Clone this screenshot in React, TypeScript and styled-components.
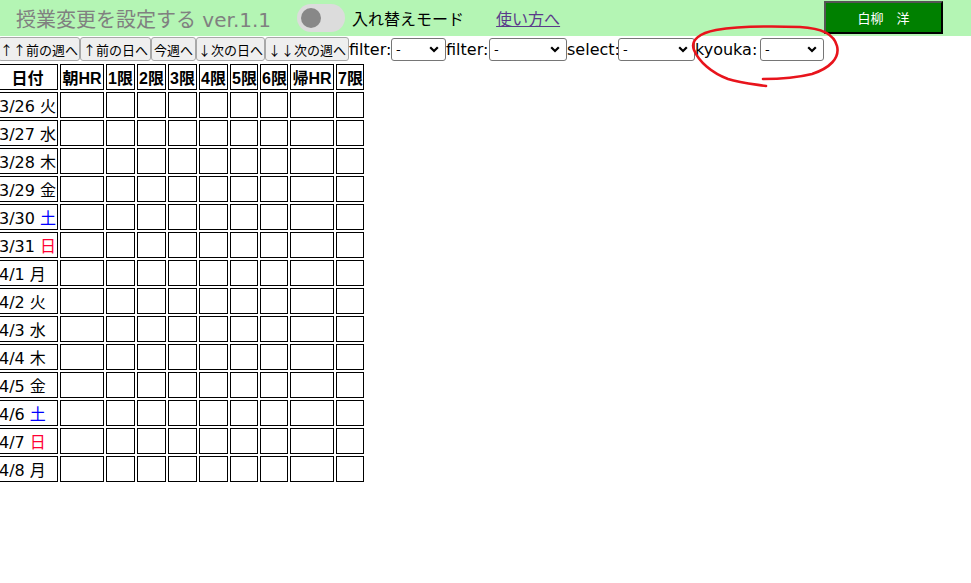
import React from "react";
import styled, { createGlobalStyle } from "styled-components";

const Global = createGlobalStyle`
  html, body { margin: 0; padding: 0; background: #fff; }
  body {
    font-family: "DejaVu Sans", "Noto Sans CJK JP", sans-serif;
    font-size: 16px;
    color: #000;
    overflow: hidden;
  }
`;

const Page = styled.div`
  position: relative;
  width: 971px;
  height: 583px;
  overflow: hidden;
`;

const Header = styled.header`
  display: flex;
  align-items: center;
  height: 36px;
  background: #b4f5b4;
`;

const Title = styled.h1`
  margin: 0 0 0 16px;
  font-size: 20px;
  font-weight: normal;
  color: #808080;
  white-space: nowrap;
`;

const Toggle = styled.span`
  display: flex;
  align-items: center;
  margin-left: 26px;
  width: 48px;
  height: 28px;
  border-radius: 14px;
  background: #dcdcdc;
  box-sizing: border-box;
  padding-left: 4px;
`;

const Knob = styled.span`
  width: 20px;
  height: 20px;
  border-radius: 50%;
  background: #888;
`;

const ModeLabel = styled.span`
  margin-left: 7px;
  font-size: 16px;
  white-space: nowrap;
`;

const HelpLink = styled.a`
  margin-left: 32px;
  font-size: 16px;
  color: #5a3a8a;
  text-decoration: underline;
  white-space: nowrap;
`;

const UserButton = styled.button`
  margin-left: auto;
  margin-right: 28px;
  width: 119px;
  height: 33px;
  margin-top: -2px;
  background: #008000;
  color: #fff;
  font-family: "Noto Sans CJK JP", sans-serif;
  font-size: 13px;
  border: 2px solid;
  border-color: #555 #000 #000 #555;
  padding: 0;
  cursor: pointer;
`;

const Toolbar = styled.div`
  display: flex;
  align-items: center;
  height: 26px;
  margin-left: -2px;
`;

const NavButton = styled.button<{ $w: number }>`
  width: ${(p) => p.$w}px;
  height: 24px;
  padding: 0;
  background: #efefef;
  border: 1px solid #a8a8a8;
  border-radius: 3px;
  font-family: "Noto Sans CJK JP", sans-serif;
  font-size: 13px;
  color: #000;
  white-space: nowrap;
  overflow: hidden;
  flex: none;
`;

const FieldLabel = styled.span<{ $w: number }>`
  display: inline-block;
  width: ${(p) => p.$w}px;
  flex: none;
  font-size: 16px;
  white-space: nowrap;
`;

const SelectWrap = styled.span<{ $w: number }>`
  position: relative;
  display: inline-block;
  width: ${(p) => p.$w}px;
  height: 23px;
  flex: none;
`;

const Select = styled.select`
  appearance: none;
  width: 100%;
  height: 100%;
  box-sizing: border-box;
  border: 1px solid #767676;
  border-radius: 3px;
  background: #fff;
  padding: 0 0 0 4px;
  font-family: "DejaVu Sans", sans-serif;
  font-size: 13px;
  color: #000;
`;

const Chevron = styled.svg`
  position: absolute;
  right: 7px;
  top: 8px;
  width: 10px;
  height: 7px;
  pointer-events: none;
`;

const Table = styled.table`
  border-collapse: separate;
  border-spacing: 2px;
  table-layout: fixed;
  width: 371px;
  margin-left: -5px;
`;

const Th = styled.th<{ $w: number }>`
  box-sizing: border-box;
  width: ${(p) => p.$w}px;
  height: 26px;
  padding: 0 1px;
  border: 1px solid #000;
  font-family: "Liberation Sans", "Noto Sans CJK JP", sans-serif;
  font-weight: bold;
  font-size: 16px;
  white-space: nowrap;
  overflow: hidden;
  text-align: center;
`;

const Td = styled.td`
  box-sizing: border-box;
  height: 26px;
  padding: 0 1px;
  border: 1px solid #000;
`;

const DateCell = styled(Td)`
  font-size: 16px;
  white-space: nowrap;
  text-align: left;
`;

const Weekday = styled.span<{ $c: string }>`
  color: ${(p) => p.$c};
`;

const Annotation = styled.svg`
  position: absolute;
  left: 0;
  top: 0;
  width: 971px;
  height: 583px;
  pointer-events: none;
`;

const navButtons = [
  { t: "↑↑前の週へ", w: 82 },
  { t: "↑前の日へ", w: 71 },
  { t: "今週へ", w: 45 },
  { t: "↓次の日へ", w: 69 },
  { t: "↓↓次の週へ", w: 84 },
];

const fields = [
  { l: "filter:", lw: 42, sw: 55 },
  { l: "filter:", lw: 43, sw: 78 },
  { l: "select:", lw: 51, sw: 77 },
  { l: "kyouka:", lw: 65, sw: 64 },
];

const cols = [
  { t: "朝HR", w: 44 },
  { t: "1限", w: 29 },
  { t: "2限", w: 29 },
  { t: "3限", w: 29 },
  { t: "4限", w: 29 },
  { t: "5限", w: 28 },
  { t: "6限", w: 28 },
  { t: "帰HR", w: 44 },
  { t: "7限", w: 28 },
];

const days = [
  ["3/26", "火"],
  ["3/27", "水"],
  ["3/28", "木"],
  ["3/29", "金"],
  ["3/30", "土"],
  ["3/31", "日"],
  ["4/1", "月"],
  ["4/2", "火"],
  ["4/3", "水"],
  ["4/4", "木"],
  ["4/5", "金"],
  ["4/6", "土"],
  ["4/7", "日"],
  ["4/8", "月"],
];

const wdColor = (w: string) => (w === "土" ? "#0000ff" : w === "日" ? "#ff0033" : "#000");

export default function App() {
  return (
    <Page>
      <Global />
      <Header>
        <Title>授業変更を設定する ver.1.1</Title>
        <Toggle>
          <Knob />
        </Toggle>
        <ModeLabel>入れ替えモード</ModeLabel>
        <HelpLink href="#">使い方へ</HelpLink>
        <UserButton>白柳　洋</UserButton>
      </Header>
      <Toolbar>
        {navButtons.map((b) => (
          <NavButton key={b.t} $w={b.w}>
            {b.t}
          </NavButton>
        ))}
        {fields.map((f, i) => (
          <React.Fragment key={i}>
            <FieldLabel $w={f.lw}>{f.l}</FieldLabel>
            <SelectWrap $w={f.sw}>
              <Select defaultValue="-">
                <option value="-">-</option>
              </Select>
              <Chevron viewBox="0 0 10 7">
                <path d="M1.2 1.2 L5 5 L8.8 1.2" fill="none" stroke="#000" strokeWidth="2.2" />
              </Chevron>
            </SelectWrap>
          </React.Fragment>
        ))}
      </Toolbar>
      <Table>
        <thead>
          <tr>
            <Th $w={61}>日付</Th>
            {cols.map((c) => (
              <Th key={c.t} $w={c.w}>
                {c.t}
              </Th>
            ))}
          </tr>
        </thead>
        <tbody>
          {days.map(([d, w]) => (
            <tr key={d}>
              <DateCell>
                {d} <Weekday $c={wdColor(w)}>{w}</Weekday>
              </DateCell>
              {cols.map((c) => (
                <Td key={c.t} />
              ))}
            </tr>
          ))}
        </tbody>
      </Table>
      <Annotation viewBox="0 0 971 583">
        <path
          d="M766 86 C752 84 740 83 728 79 C712 73 699 62 694 50 C690 40 700 33 716 30 C740 26 770 26 800 27 C820 28 834 34 837 46 C840 58 830 68 812 74 C796 78 780 79 763 79"
          fill="none"
          stroke="#e8141c"
          strokeWidth="2.6"
          strokeLinecap="round"
        />
      </Annotation>
    </Page>
  );
}
